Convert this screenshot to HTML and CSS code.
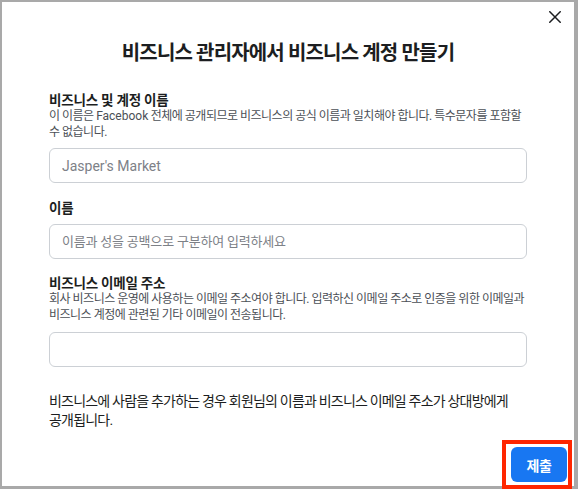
FILE: index.html
```html
<!DOCTYPE html>
<html lang="ko">
<head>
<meta charset="utf-8">
<title>비즈니스 계정 만들기</title>
<link rel="stylesheet" href="styles.css">
</head>
<body>
<div class="page">
  <div class="dialog">
    <div class="topbar">
      <button class="close" type="button" aria-label="닫기">
        <svg width="12" height="12" viewBox="0 0 12 12"><path d="M0.8 0.8 L11.2 11.2 M11.2 0.8 L0.8 11.2" stroke="#1c1e21" stroke-width="1.5" fill="none" stroke-linecap="square"/></svg>
      </button>
    </div>
    <div class="body">
      <h1 class="title">비즈니스 관리자에서 비즈니스 계정 만들기</h1>

      <div class="field field--first">
        <div class="label">비즈니스 및 계정 이름</div>
        <div class="desc desc--lines">이 이름은 <span class="latin">Facebook</span> 전체에 공개되므로 비즈니스의 공식 이름과 일치해야 합니다. 특수문자를 포함할<br>수 없습니다.</div>
        <input class="input" type="text" placeholder="Jasper's Market">
      </div>

      <div class="field">
        <div class="label">이름</div>
        <input class="input input--ko" type="text" placeholder="이름과 성을 공백으로 구분하여 입력하세요">
      </div>

      <div class="field">
        <div class="label">비즈니스 이메일 주소</div>
        <div class="desc desc--lines">회사 비즈니스 운영에 사용하는 이메일 주소여야 합니다. 입력하신 이메일 주소로 인증을 위한 이메일과<br>비즈니스 계정에 관련된 기타 이메일이 전송됩니다.</div>
        <input class="input input--email" type="email">
      </div>

      <p class="notice">비즈니스에 사람을 추가하는 경우 회원님의 이름과 비즈니스 이메일 주소가 상대방에게<br>공개됩니다.</p>
    </div>
    <div class="footer">
      <button class="submit" type="button">제출</button>
    </div>
  </div>
  <div class="highlight"></div>
</div>
</body>
</html>
```
FILE: styles.css
```css
* { box-sizing: border-box; }

html, body {
  margin: 0;
  padding: 0;
  background: #ffffff;
}

body {
  font-family: Roboto, "Noto Sans CJK KR", sans-serif;
  color: #1c1e21;
  word-break: keep-all;
}

.page {
  position: relative;
  width: 578px;
  height: 489px;
  overflow: hidden;
}

.dialog {
  width: 578px;
  height: 489px;
  background: #ffffff;
  border-style: solid;
  border-color: #a9a9a9;
  border-width: 2px 4px 3px 2px;
  display: flex;
  flex-direction: column;
}

.topbar {
  display: flex;
  justify-content: flex-end;
  padding: 9px 13px 0 0;
  height: 21px;
}

.close {
  display: block;
  width: 12px;
  height: 12px;
  padding: 0;
  margin: 0;
  border: 0;
  background: transparent;
  line-height: 0;
  cursor: pointer;
}

.close svg { display: block; }

.body {
  padding: 0 47px;
}

.title {
  margin: 18px 0 0;
  font-size: 20px;
  line-height: 24px;
  font-weight: 700;
  text-align: center;
  letter-spacing: -0.85px;
  color: #1c1e21;
}

.field {
  display: flex;
  flex-direction: column;
  margin-top: 17px;
}

.field--first { margin-top: 27px; }

.field:last-of-type { margin-top: 16px; }

.label {
  font-size: 13.5px;
  line-height: 16px;
  font-weight: 700;
  letter-spacing: -0.2px;
  color: #1c1e21;
}

.desc {
  font-size: 12px;
  line-height: 16px;
  letter-spacing: -0.5px;
  color: #4b4f56;
}

.desc--lines { white-space: nowrap; }

.latin { letter-spacing: 0; }

.input {
  margin-top: 8px;
  width: 100%;
  height: 35px;
  padding: 0 12px;
  border: 1px solid #ccd0d5;
  border-radius: 6px;
  background: #ffffff;
  font-family: Roboto, "Noto Sans CJK KR", sans-serif;
  font-size: 14px;
  color: #1c1e21;
  outline: none;
}

.input::placeholder { color: #7d8187; }

.input--ko {
  font-size: 13px;
  letter-spacing: -0.2px;
}

.input--email { margin-top: 9px; }

.notice {
  margin: 25px 0 0;
  font-size: 14px;
  line-height: 19px;
  letter-spacing: -0.8px;
  color: #1c1e21;
}

.footer {
  display: flex;
  justify-content: flex-end;
  padding: 17px 7px 0 0;
}

.submit {
  width: 56px;
  height: 35px;
  border: 0;
  border-radius: 6px;
  background: #1877f2;
  color: #ffffff;
  font-family: Roboto, "Noto Sans CJK KR", sans-serif;
  font-size: 14px;
  font-weight: 700;
  letter-spacing: -0.3px;
  padding: 0;
  cursor: pointer;
}

.highlight {
  position: absolute;
  left: 502px;
  top: 440px;
  width: 70px;
  height: 49px;
  border: 4px solid #ff2600;
  pointer-events: none;
}
```
